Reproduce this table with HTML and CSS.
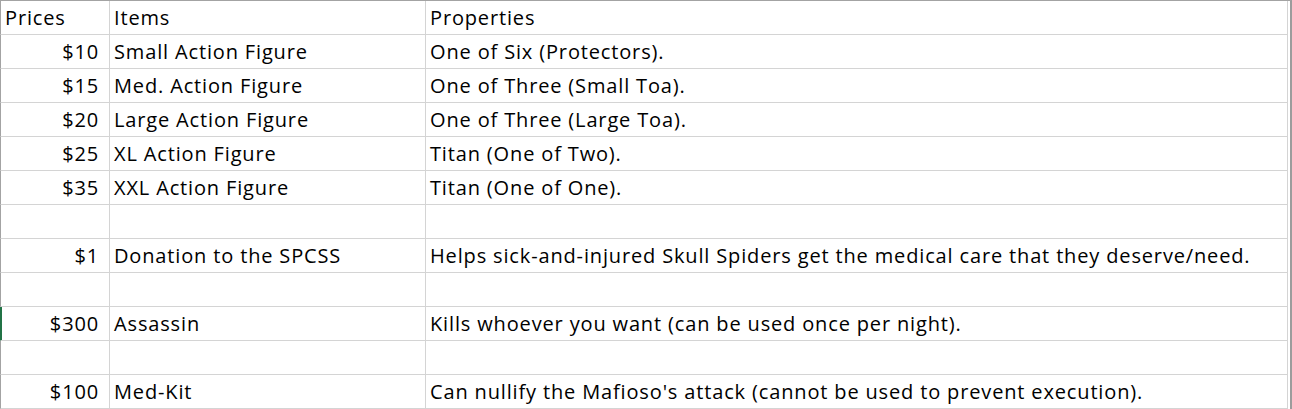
FILE: index.html
```html
<!DOCTYPE html>
<html lang="en">
<head>
<meta charset="utf-8">
<title>Prices</title>
<link rel="stylesheet" href="styles.css">
</head>
<body>
<div class="sheet">
  <table class="grid">
    <colgroup>
      <col class="c-price">
      <col class="c-item">
      <col class="c-prop">
    </colgroup>
    <tbody>
      <tr><td class="txt first">Prices</td><td class="txt">Items</td><td class="txt">Properties</td></tr>
      <tr><td class="num first">$10</td><td class="txt">Small Action Figure</td><td class="txt">One of Six (Protectors).</td></tr>
      <tr><td class="num first">$15</td><td class="txt">Med. Action Figure</td><td class="txt">One of Three (Small Toa).</td></tr>
      <tr><td class="num first">$20</td><td class="txt">Large Action Figure</td><td class="txt">One of Three (Large Toa).</td></tr>
      <tr><td class="num first">$25</td><td class="txt">XL Action Figure</td><td class="txt">Titan (One of Two).</td></tr>
      <tr><td class="num first">$35</td><td class="txt">XXL Action Figure</td><td class="txt">Titan (One of One).</td></tr>
      <tr><td class="num first"></td><td class="txt"></td><td class="txt"></td></tr>
      <tr><td class="num first">$1</td><td class="txt">Donation to the SPCSS</td><td class="txt">Helps sick-and-injured Skull Spiders get the medical care that they deserve/need.</td></tr>
      <tr><td class="num first"></td><td class="txt"></td><td class="txt"></td></tr>
      <tr><td class="num first sel">$300</td><td class="txt">Assassin</td><td class="txt">Kills whoever you want (can be used once per night).</td></tr>
      <tr><td class="num first"></td><td class="txt"></td><td class="txt"></td></tr>
      <tr><td class="num first">$100</td><td class="txt">Med-Kit</td><td class="txt">Can nullify the Mafioso's attack (cannot be used to prevent execution).</td></tr>
    </tbody>
  </table>
</div>
</body>
</html>
```
FILE: styles.css
```css
html, body {
  margin: 0;
  padding: 0;
  background: #ffffff;
}

.sheet {
  width: 1292px;
  box-sizing: border-box;
  border-top: 1px solid #a3a3a3;
  border-right: 2px solid #9c9c9c;
  padding-right: 2px;
}

.grid {
  border-collapse: separate;
  border-spacing: 0;
  table-layout: fixed;
  width: 100%;
  font-family: "Open Sans", "Liberation Sans", sans-serif;
  font-size: 20px;
  letter-spacing: 0.85px;
  color: #000000;
}

.c-price { width: 110px; }
.c-item { width: 316px; }

.grid tr {
  height: 34px;
}

.grid td {
  padding: 0 4px;
  line-height: 33px;
  white-space: nowrap;
  overflow: hidden;
  border-right: 1px solid #d4d4d4;
  border-bottom: 1px solid #d4d4d4;
  vertical-align: middle;
}

.grid td.first {
  border-left: 1px solid #a3a3a3;
}

.grid td.num {
  text-align: right;
  padding-right: 10px;
}

.grid td.sel {
  border-left-color: #217346;
  box-shadow: inset 1px 0 0 #217346;
}
```
